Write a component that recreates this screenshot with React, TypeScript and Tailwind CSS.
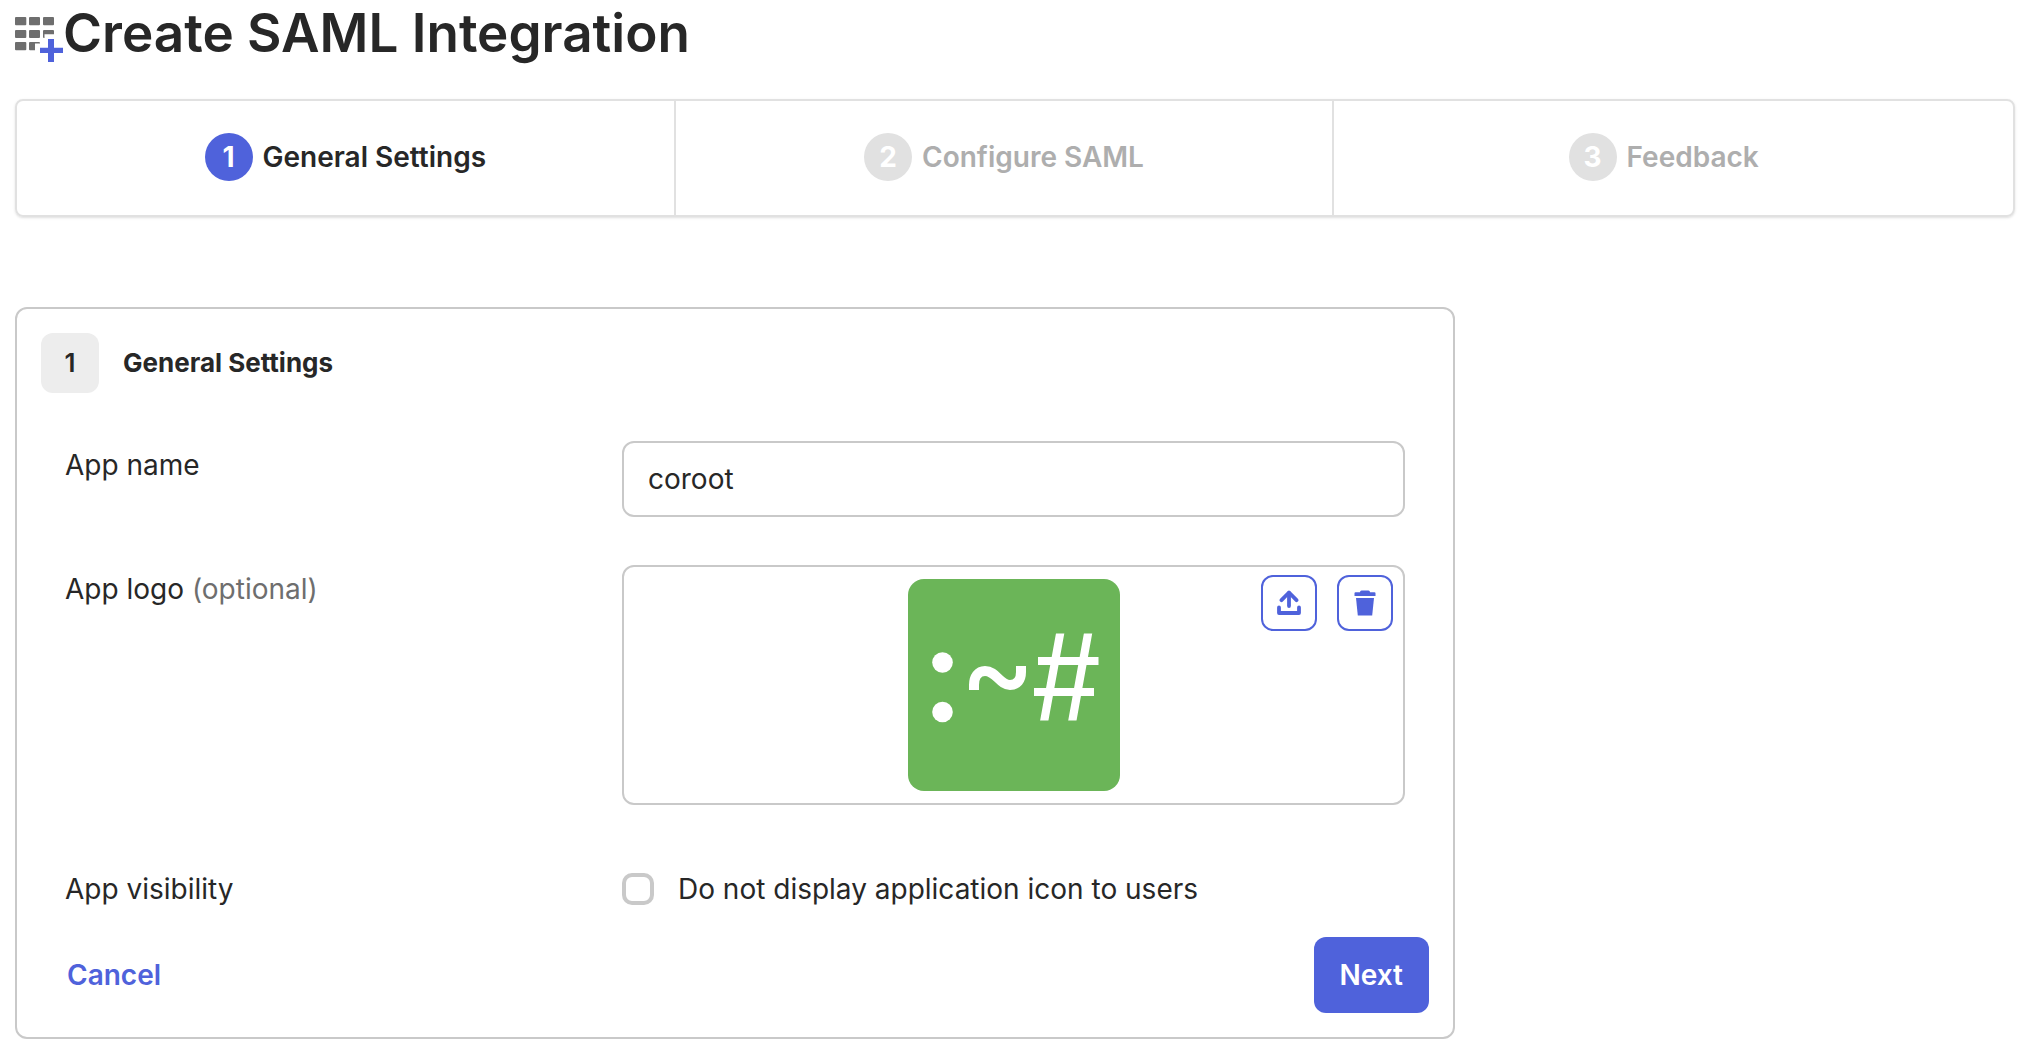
import { useState } from "react";

const steps = [
  { number: 1, label: "General Settings" },
  { number: 2, label: "Configure SAML" },
  { number: 3, label: "Feedback" },
];

function AppGridIcon() {
  return (
    <svg width="48" height="46" viewBox="0 0 48 46" aria-hidden="true" className="shrink-0">
      <g fill="#6e6e6e">
        <rect x="0" y="0" width="11.3" height="8.3" rx="1" />
        <rect x="14" y="0" width="11" height="8.3" rx="1" />
        <rect x="28" y="0" width="11" height="8.3" rx="1" />
        <rect x="0" y="13" width="11.3" height="8" rx="1" />
        <rect x="14" y="13" width="11" height="8" rx="1" />
        <rect x="28" y="13" width="11" height="8" rx="1" />
        <rect x="0" y="25" width="11.3" height="8.3" rx="1" />
        <rect x="14" y="25" width="11" height="8.3" rx="1" />
      </g>
      <path d="M29.5 17.3H43V46H29.5V36H20V26.5H29.5Z" fill="#fff" />
      <path d="M33 22h6v8.7h9V36h-9v9h-6v-9h-8v-5.300h8z" fill="#4f62db" />
    </svg>
  );
}

function CorootLogo() {
  return (
    <svg width="212" height="212" viewBox="0 0 212 212" role="img" aria-label="coroot logo">
      <defs>
        <clipPath id="hash-bounds">
          <rect x="120" y="54.500" width="80" height="87" />
        </clipPath>
      </defs>
      <rect width="212" height="212" rx="16" fill="#6bb558" />
      <circle cx="34.5" cy="83.5" r="10.3" fill="#fff" />
      <circle cx="34.5" cy="133" r="10.3" fill="#fff" />
      <path
        d="M66 111v-5c0-8 4-14 11-14c11 0 15 14 25 14c7 0 11-5 11-13v-6"
        fill="none"
        stroke="#fff"
        strokeWidth="10"
      />
      <path
        d="M153.300 48L135.100 148M181.200 48L163.200 148M130 82h60.500M126 113h60"
        fill="none"
        stroke="#fff"
        strokeWidth="8.2"
        clipPath="url(#hash-bounds)"
      />
    </svg>
  );
}

function UploadIcon() {
  return (
    <svg width="24" height="26" viewBox="0 0 24 26" fill="none" stroke="currentColor" strokeWidth="3.8" strokeLinejoin="round" strokeLinecap="round" aria-hidden="true">
      <path d="M12 3v13" />
      <path d="M4.500 10.200L12 2.500l7.500 7.700" />
      <path d="M2 17.500v5.500h20v-5.500" />
    </svg>
  );
}

function TrashIcon() {
  return (
    <svg width="22" height="26" viewBox="0 0 22 26" fill="currentColor" aria-hidden="true">
      <path d="M6 2.200Q6 .5 7.500.5h7Q16 .5 16 2.200h4.500q1 0 1 1V6H.5V3.200q0-1 1-1z" />
      <path d="M2 8h18l-1.800 17.500H3.800z" />
    </svg>
  );
}

const iconButton =
  "flex size-14 items-center justify-center rounded-xl border-2 border-[#4f62db] bg-white text-[#4f62db]";

const row = "grid grid-cols-[557fr_783fr] px-6";

export default function App() {
  const [name, setName] = useState("coroot");
  const [hidden, setHidden] = useState(false);

  return (
    <main className="bg-white px-[15px] font-['Inter',sans-serif] text-[28px] leading-9 text-[#272727]">
      <header className="flex items-start">
        <div className="pt-[17px]">
          <AppGridIcon />
        </div>
        <h1 className="text-[53px] leading-[66px] font-semibold">Create SAML Integration</h1>
      </header>

      <ol className="mt-[33px] flex rounded-lg border-2 border-[#e1e1e1] shadow-sm">
        {steps.map((step, i) => (
          <li
            key={step.number}
            aria-current={i === 0 ? "step" : undefined}
            className={
              i === 0
                ? "flex h-[114px] w-[33%] items-center justify-center gap-[10px] border-r-2 border-[#e1e1e1] pb-0.5 font-semibold"
                : i === 1
                  ? "flex h-[114px] w-[33%] items-center justify-center gap-[10px] border-r-2 border-[#e1e1e1] pb-0.5 font-semibold text-[#aeaeae]"
                  : "flex h-[114px] w-[33%] items-center justify-center gap-[10px] pb-0.5 font-semibold text-[#aeaeae]"
            }
          >
            <span
              className={
                i === 0
                  ? "flex size-12 items-center justify-center rounded-full bg-[#4f62db] font-bold text-white"
                  : "flex size-12 items-center justify-center rounded-full bg-[#e1e1e1] font-bold text-white"
              }
            >
              {step.number}
            </span>
            {step.label}
          </li>
        ))}
      </ol>

      <form
        onSubmit={(e) => e.preventDefault()}
        className="mt-[90px] w-full max-w-[1440px] rounded-xl border-2 border-[#c9c9c9] p-6"
      >
        <div className="flex items-center gap-6">
          <span className="flex h-[60px] w-[58px] items-center justify-center rounded-xl bg-[#ededed] text-[26px] font-semibold">
            1
          </span>
          <h2 className="text-[26px] font-bold">General Settings</h2>
        </div>

        <div className={`${row} mt-12`}>
          <label htmlFor="app-name" className="pt-[6px]">
            App name
          </label>
          <input
            id="app-name"
            type="text"
            value={name}
            onChange={(e) => setName(e.target.value)}
            className="h-[76px] w-full rounded-xl border-2 border-[#c9c9c9] px-6 outline-none"
          />
        </div>

        <div className={`${row} mt-12`}>
          <div className="pt-[6px]">
            App logo <span className="text-[#6e6e6e]">(optional)</span>
          </div>
          <div className="relative flex h-[240px] items-center justify-center rounded-xl border-2 border-[#c9c9c9]">
            <CorootLogo />
            <div className="absolute top-2 right-[10px] flex gap-5">
              <button type="button" aria-label="Upload logo" className={iconButton}>
                <UploadIcon />
              </button>
              <button type="button" aria-label="Delete logo" className={iconButton}>
                <TrashIcon />
              </button>
            </div>
          </div>
        </div>

        <div className={`${row} mt-[66px]`}>
          <div>App visibility</div>
          <label className="flex items-center gap-6">
            <input
              type="checkbox"
              checked={hidden}
              onChange={(e) => setHidden(e.target.checked)}
              className="size-8 appearance-none rounded-[10px] border-4 border-[#c9c9c9] checked:bg-[#4f62db]"
            />
            Do not display application icon to users
          </label>
        </div>

        <div className="mt-[30px] flex items-center justify-between pl-[26px]">
          <button type="button" className="font-semibold text-[#4f62db]">
            Cancel
          </button>
          <button type="submit" className="h-[76px] rounded-xl bg-[#4f62db] px-[26px] font-semibold text-white">
            Next
          </button>
        </div>
      </form>
    </main>
  );
}
